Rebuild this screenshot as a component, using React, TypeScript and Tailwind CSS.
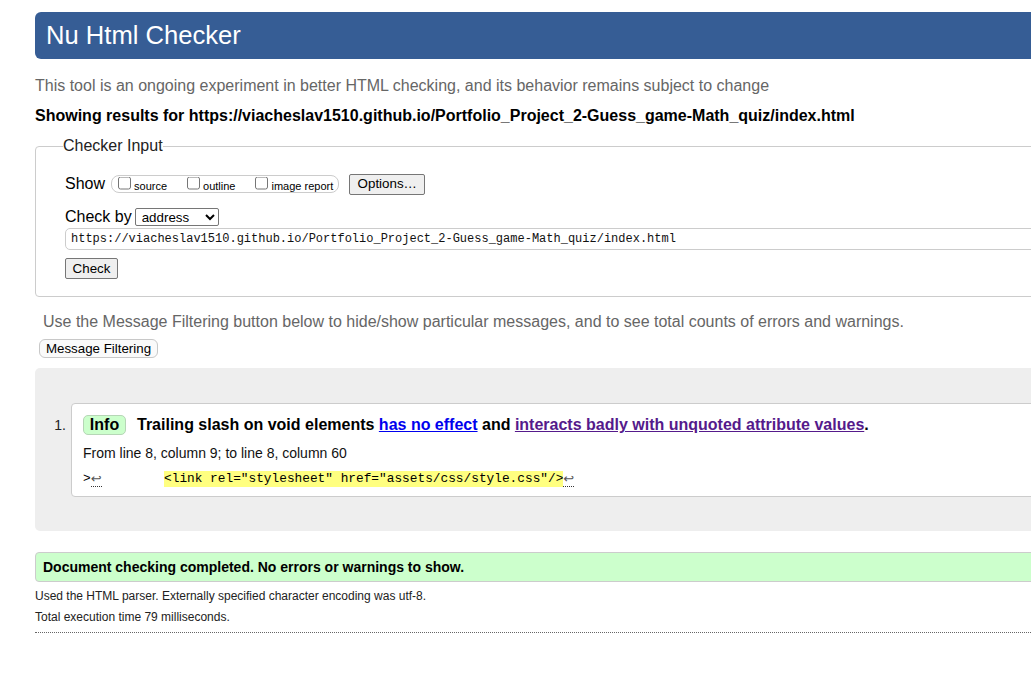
import React from "react";

const url = "https://viacheslav1510.github.io/Portfolio_Project_2-Guess_game-Math_quiz/index.html";

function Box({ label }: { label: string }) {
  return (
    <label className="flex items-center gap-[3px]">
      <input type="checkbox" className="m-0 w-[13px] h-[13px] -translate-y-[1.5px]" />
      <span className="text-[11px] leading-[14px] translate-y-[1.5px]">{label}</span>
    </label>
  );
}

function LineBreak() {
  return (
    <span className="border-b border-dotted border-[#333] text-[#555] font-['DejaVu_Sans',sans-serif] text-[13px] leading-[15px]">
      ↩
    </span>
  );
}

export default function App() {
  return (
    <div className="w-[1031px] h-[685px] overflow-hidden bg-white text-black font-['Liberation_Sans',Arial,sans-serif]">
      <div className="ml-[35px] w-[1100px] flex flex-col">
        {/* Title bar */}
        <h1 className="mt-[12px] h-[47px] flex items-center pl-[11px] rounded-l-[6px] bg-[#365d95] text-white text-[25.6px] font-normal">
          Nu Html Checker
        </h1>

        <p className="mt-[17px] text-[16px] leading-[20px] text-[#666]">
          This tool is an ongoing experiment in better HTML checking, and its behavior remains subject to change
        </p>
        <p className="mt-[10px] text-[16px] leading-[20px] font-bold">
          Showing results for {url}
        </p>

        {/* Checker input */}
        <fieldset className="mt-[10px] border border-[#ccc] rounded-[4px] pl-[29px] pb-[17px]">
          <legend className="ml-[-2px] text-[16px] leading-[20px] text-[#222]">Checker Input</legend>

          <div className="mt-[17px] h-[22px] flex items-center text-[16px]">
            <span>Show</span>
            <div className="ml-[6px] h-[18px] flex items-center gap-[20px] pl-[6px] pr-[5px] border border-[#ccc] rounded-[8px]">
              <Box label="source" />
              <Box label="outline" />
              <Box label="image report" />
            </div>
            <button className="ml-[10px] w-[76px] h-[21px] bg-[#efefef] border border-[#767676] rounded-[2px] text-[13.33px] leading-none">
              Options…
            </button>
          </div>

          <div className="mt-[11px] h-[22px] flex items-center text-[16px]">
            <span>Check by</span>
            <select className="ml-[3px] w-[84px] h-[18px] border border-[#767676] rounded-[2px] text-[13.33px] pl-[2px] bg-white">
              <option>address</option>
            </select>
          </div>

          <div className="h-[22px] flex items-center border border-[#ccc] rounded-[5px] pl-[5px] font-['Liberation_Mono',monospace] text-[12px] text-[#111]">
            {url}
          </div>

          <div className="mt-[8px] flex">
            <button className="w-[53px] h-[21px] bg-[#efefef] border border-[#767676] rounded-[2px] text-[13.33px] leading-none">
              Check
            </button>
          </div>
        </fieldset>

        <p className="mt-[15px] pl-[8px] text-[16px] leading-[20px] text-[#666]">
          Use the Message Filtering button below to hide/show particular messages, and to see total counts of errors and warnings.
        </p>
        <div className="mt-[7px] ml-[4px] flex">
          <button className="w-[119px] h-[19px] bg-[#fafafa] border border-[#c8c8c8] rounded-[6px] text-[13.33px] leading-none">
            Message Filtering
          </button>
        </div>

        {/* Results */}
        <div className="mt-[10px] h-[163px] bg-[#eee] rounded-l-[5px] pt-[35px] flex items-start">
          <div className="w-[36px] pr-[5px] pt-[12px] text-right text-[14px] leading-[20px] text-[#222]">1.</div>
          <div className="flex-1 h-[94px] bg-white border border-[#ccc] rounded-[4px] pl-[11px] pt-[11px]">
            <div className="h-[20px] flex items-center text-[16px] font-bold">
              <span className="w-[43px] h-[20px] flex items-center justify-center bg-[#ccffcc] border border-[#b6d6b6] rounded-[5px]">
                Info
              </span>
              <span className="ml-[11px] whitespace-nowrap">
                Trailing slash on void elements{" "}
                <a href="#" className="text-[#0000ee] underline">has no effect</a> and{" "}
                <a href="#" className="text-[#551a8b] underline">interacts badly with unquoted attribute values</a>.
              </span>
            </div>
            <p className="mt-[8px] text-[14px] leading-[20px] text-[#111]">
              From line 8, column 9; to line 8, column 60
            </p>
            <div className="mt-[6px] h-[20px] flex items-center font-['Liberation_Mono',monospace] text-[12.8px] leading-[16px] whitespace-pre">
              <span>&gt;</span>
              <LineBreak />
              <span>{"        "}</span>
              <span className="ml-[1px] bg-[#ffff80]">{'<link rel="stylesheet" href="assets/css/style.css"/>'}</span>
              <LineBreak />
            </div>
          </div>
        </div>

        <div className="mt-[21px] h-[30px] flex items-center pl-[7px] bg-[#ccffcc] border border-[#ccc] rounded-l-[4px] text-[14px] font-bold">
          Document checking completed. No errors or warnings to show.
        </div>
        <p className="mt-[6px] text-[12px] leading-[16px] text-[#222]">
          Used the HTML parser. Externally specified character encoding was utf-8.
        </p>
        <p className="mt-[5px] text-[12px] leading-[16px] text-[#222]">Total execution time 79 milliseconds.</p>
        <div className="mt-[7px] border-t border-dotted border-[#666]" />
      </div>
    </div>
  );
}
